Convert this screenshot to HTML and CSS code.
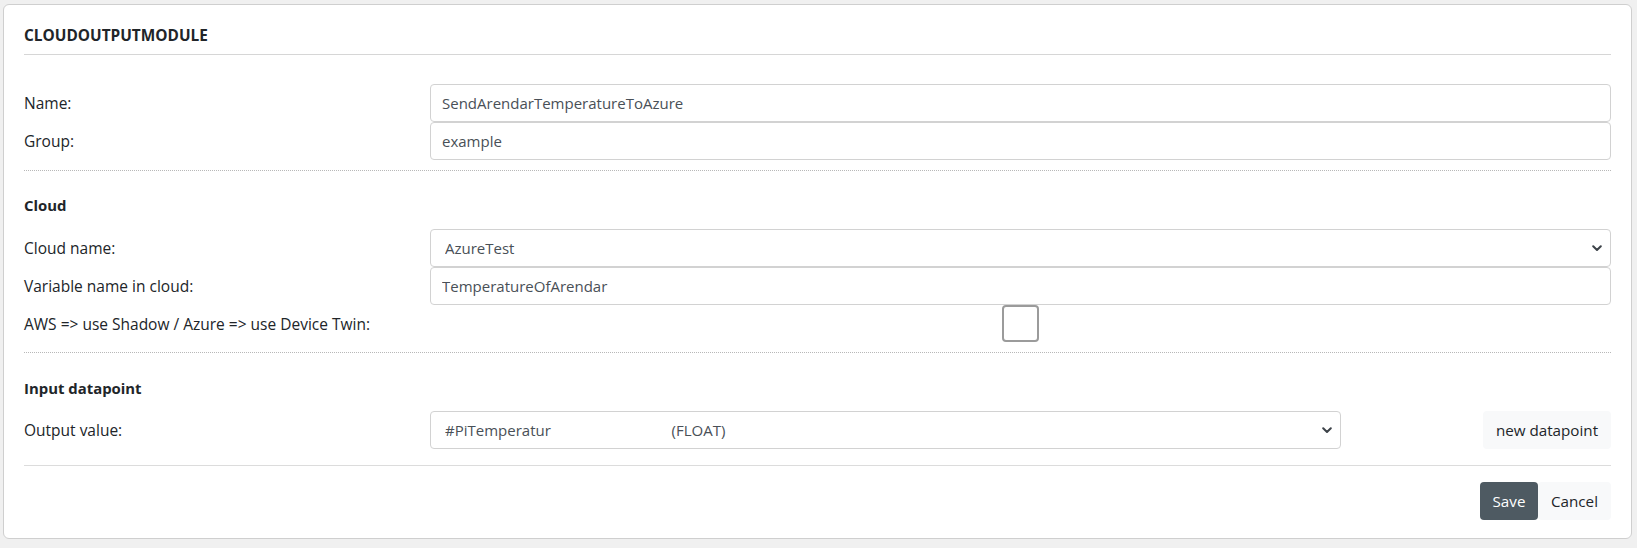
FILE: index.html
```html
<!DOCTYPE html>
<html lang="en">
<head>
<meta charset="utf-8">
<title>CloudOutputModule</title>
<link rel="stylesheet" href="styles.css">
</head>
<body>
<div class="card">
  <div class="card-title">CLOUDOUTPUTMODULE</div>
  <form class="module-form">
    <div class="rows first">
      <label class="lbl" for="name">Name:</label>
      <input class="ctrl" id="name" type="text" value="SendArendarTemperatureToAzure">
      <label class="lbl" for="group">Group:</label>
      <input class="ctrl" id="group" type="text" value="example">
    </div>
    <hr class="dotted">
    <div class="section-title">Cloud</div>
    <div class="rows">
      <label class="lbl" for="cloud">Cloud name:</label>
      <div class="select-wrap">
        <select class="ctrl sel" id="cloud"><option>AzureTest</option></select>
        <svg class="chev" width="10" height="7" viewBox="0 0 10 7"><path d="M1.2 1.2 L5 5 L8.8 1.2" fill="none" stroke="#3d4349" stroke-width="2" stroke-linecap="round" stroke-linejoin="round"/></svg>
      </div>
      <label class="lbl" for="var">Variable name in cloud:</label>
      <input class="ctrl" id="var" type="text" value="TemperatureOfArendar">
      <label class="lbl" for="twin">AWS =&gt; use Shadow / Azure =&gt; use Device Twin:</label>
      <div class="check-cell"><input class="check" id="twin" type="checkbox"></div>
    </div>
    <hr class="dotted">
    <div class="section-title second">Input datapoint</div>
    <div class="dp-row">
      <label class="lbl" for="dp">Output value:</label>
      <div class="select-wrap">
        <select class="ctrl sel" id="dp"><option>#PiTemperatur&nbsp;&nbsp;&nbsp;&nbsp;&nbsp;&nbsp;&nbsp;&nbsp;&nbsp;&nbsp;&nbsp;&nbsp;&nbsp;&nbsp;&nbsp;&nbsp;&nbsp;&nbsp;&nbsp;&nbsp;&nbsp;&nbsp;&nbsp;&nbsp;&nbsp;&nbsp;&nbsp;&nbsp;&nbsp;&nbsp;&nbsp;(FLOAT)</option></select>
        <svg class="chev" width="10" height="7" viewBox="0 0 10 7"><path d="M1.2 1.2 L5 5 L8.8 1.2" fill="none" stroke="#3d4349" stroke-width="2" stroke-linecap="round" stroke-linejoin="round"/></svg>
      </div>
      <button type="button" class="btn btn-light new-dp">new datapoint</button>
    </div>
    <hr class="solid">
    <div class="actions">
      <button type="submit" class="btn btn-save">Save</button>
      <button type="button" class="btn btn-light btn-cancel">Cancel</button>
    </div>
  </form>
</div>
</body>
</html>
```

FILE: styles.css
```css
* { box-sizing: border-box; }

html, body {
  margin: 0;
  background: #f0f0f0;
}

body {
  padding: 4px 5px 8px 3px;
  font-family: "Open Sans", "Noto Sans", "Liberation Sans", sans-serif;
  font-size: 15.5px;
  color: #212529;
}

.card {
  background: #fff;
  border: 1px solid #cfcfcf;
  border-radius: 6px;
  padding: 20px 20px 18px 20px;
}

.card-title {
  font-weight: 700;
  font-size: 15.4px;
  line-height: 22px;
  padding-bottom: 7px;
  border-bottom: 1px solid #d6d6d6;
}

.module-form {
  display: block;
}

.rows {
  display: grid;
  grid-template-columns: 406px 1fr;
  align-items: center;
}

.rows.first {
  margin-top: 29px;
}

.lbl {
  line-height: 22px;
}

.ctrl {
  display: block;
  width: 100%;
  height: 38px;
  padding: 0 11px;
  font-family: inherit;
  font-size: 15px;
  color: #495057;
  background: #fff;
  border: 1px solid #d2d2d2;
  border-radius: 4px;
  outline: none;
}

.select-wrap {
  position: relative;
}

.sel {
  appearance: none;
  -webkit-appearance: none;
  padding-left: 14px;
  padding-right: 36px;
}

.chev {
  position: absolute;
  right: 9px;
  top: 16px;
  pointer-events: none;
}

.check-cell {
  display: flex;
  justify-content: center;
  height: 37px;
  align-items: center;
}

.check {
  appearance: none;
  -webkit-appearance: none;
  width: 37px;
  height: 37px;
  margin: 0;
  border: 2px solid #9b9b9b;
  border-radius: 4px;
  background: #fff;
}

hr.dotted {
  margin: 10px 0 0 0;
  border: 0;
  border-top: 1px dotted #b8b8b8;
  height: 0;
}

hr.solid {
  margin: 16px 0 0 0;
  border: 0;
  border-top: 1px solid #dcdcdc;
  height: 0;
}

.section-title {
  font-weight: 700;
  font-size: 14.9px;
  line-height: 22px;
  margin: 23px 0 13px 0;
}

.section-title.second {
  margin: 24px 0 12px 0;
}

.dp-row {
  display: grid;
  grid-template-columns: 406px 911px 1fr;
  align-items: center;
}

.btn {
  height: 38px;
  border: 0;
  border-radius: 4px;
  font-family: inherit;
  font-size: 15.2px;
  padding: 0 13px;
  cursor: pointer;
}

.btn-light {
  background: #f8f9fa;
  color: #212529;
}

.new-dp {
  justify-self: end;
  width: 128px;
  padding: 0;
}

.actions {
  display: flex;
  justify-content: flex-end;
  margin-top: 16px;
}

.btn-save {
  width: 58px;
  padding: 0;
  background: #4e5a62;
  color: #fff;
}

.btn-cancel {
  width: 73px;
  padding: 0;
}
```
